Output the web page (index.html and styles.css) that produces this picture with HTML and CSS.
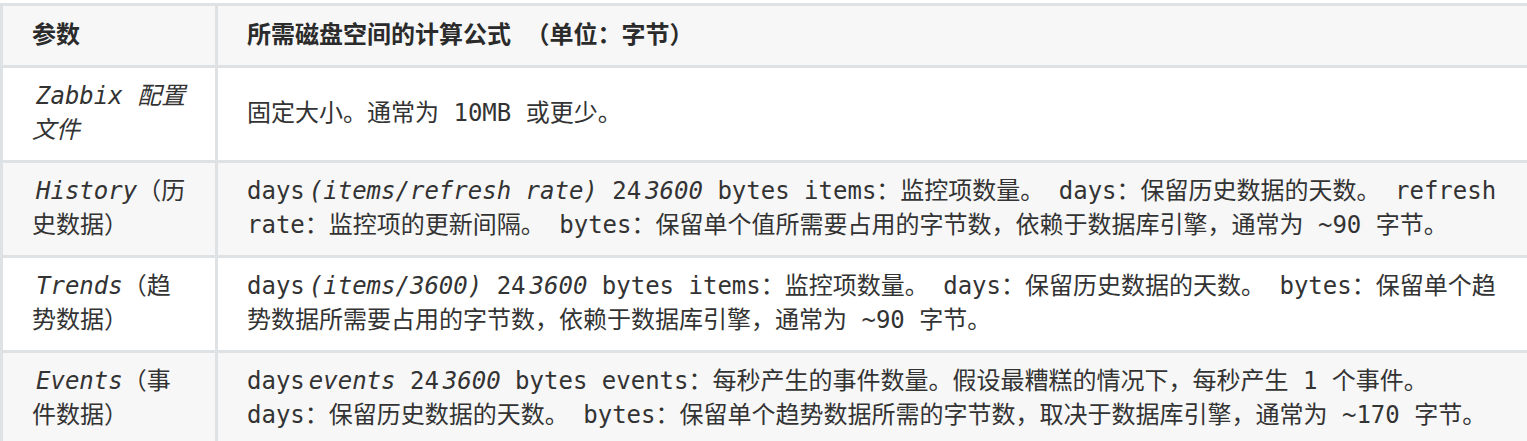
FILE: index.html
```html
<!DOCTYPE html>
<html lang="zh-CN">
<head>
<meta charset="utf-8">
<title>磁盘空间计算</title>
<link rel="stylesheet" href="styles.css">
</head>
<body>
<table class="spec">
  <thead>
    <tr>
      <th class="col-param">参数</th>
      <th class="col-formula">所需磁盘空间的计算公式 （单位：字节）</th>
    </tr>
  </thead>
  <tbody>
    <tr>
      <td class="col-param"><em>Zabbix 配置文件</em></td>
      <td class="col-formula">固定大小。通常为 10MB 或更少。</td>
    </tr>
    <tr>
      <td class="col-param"><em>History</em>（历史数据）</td>
      <td class="col-formula">days<em>(items/refresh rate)</em> 24<em>3600</em> bytes items：监控项数量。 days：保留历史数据的天数。 refresh rate：监控项的更新间隔。 bytes：保留单个值所需要占用的字节数，依赖于数据库引擎，通常为 ~90 字节。</td>
    </tr>
    <tr>
      <td class="col-param"><em>Trends</em>（趋势数据）</td>
      <td class="col-formula">days<em>(items/3600)</em> 24<em>3600</em> bytes items：监控项数量。 days：保留历史数据的天数。 bytes：保留单个趋势数据所需要占用的字节数，依赖于数据库引擎，通常为 ~90 字节。</td>
    </tr>
    <tr>
      <td class="col-param"><em>Events</em>（事件数据）</td>
      <td class="col-formula">days<em>events</em> 24<em>3600</em> bytes events：每秒产生的事件数量。假设最糟糕的情况下，每秒产生 1 个事件。 days：保留历史数据的天数。 bytes：保留单个趋势数据所需的字节数，取决于数据库引擎，通常为 ~170 字节。</td>
    </tr>
  </tbody>
</table>
</body>
</html>
```

FILE: styles.css
```css
html, body {
  margin: 0;
  padding: 0;
  background: #ffffff;
  overflow: hidden;
}

body {
  font-family: "DejaVu Sans Mono", "Noto Sans CJK SC", monospace;
  font-size: 24px;
  line-height: 33.5px;
  color: #333333;
}

.spec {
  margin-top: 3px;
  width: 1540px;
  table-layout: fixed;
  border-collapse: separate;
  border-spacing: 0;
  border-top: 3px solid #dfe2e5;
  border-left: 3px solid #dfe2e5;
}

.spec th,
.spec td {
  box-sizing: border-box;
  padding: 12.5px 29px;
  border-right: 3px solid #dfe2e5;
  border-bottom: 3px solid #dfe2e5;
  text-align: left;
  vertical-align: middle;
}

.spec th {
  font-weight: 700;
  background: #f7f7f7;
  color: #2b2b2b;
}

.spec .col-param {
  width: 215px;
  padding-right: 26px;
}

.spec tbody tr:nth-child(even) td {
  background: #f7f7f7;
}

.spec em {
  font-style: italic;
  padding-left: 4px;
}
```
